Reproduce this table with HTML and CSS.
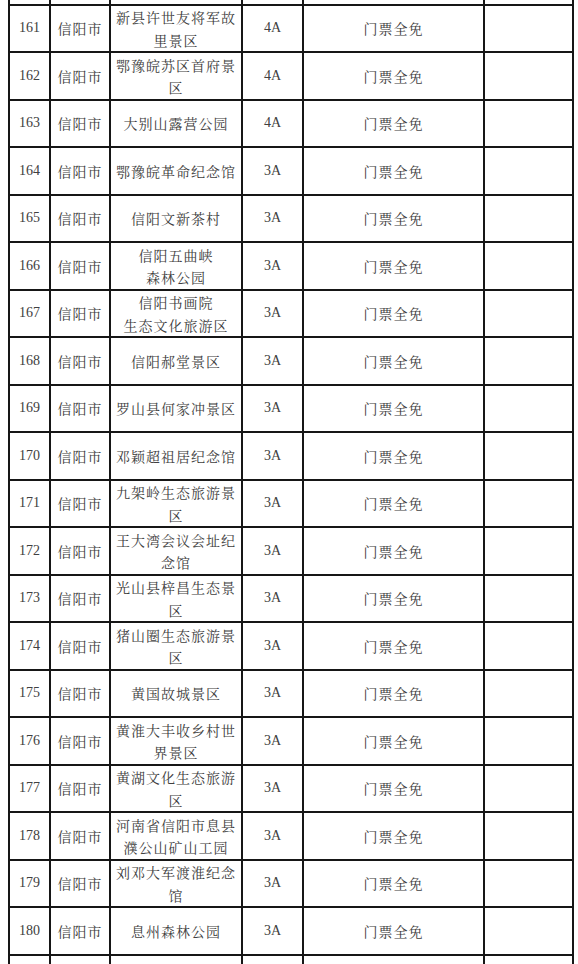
FILE: index.html
```html
<!DOCTYPE html>
<html lang="zh-CN">
<head>
<meta charset="utf-8">
<title>信阳市景区门票</title>
<link rel="stylesheet" href="styles.css">
</head>
<body>
<table class="sheet">
  <colgroup>
    <col class="c-no"><col class="c-city"><col class="c-name"><col class="c-level"><col class="c-policy"><col class="c-note">
  </colgroup>
  <tbody>
    <tr class="cut-top"><td></td><td></td><td></td><td></td><td></td><td></td></tr>
    <tr><td class="no">161</td><td class="city">信阳市</td><td class="name">新县许世友将军故里景区</td><td class="lvl">4A</td><td class="pol">门票全免</td><td></td></tr>
    <tr><td class="no">162</td><td class="city">信阳市</td><td class="name">鄂豫皖苏区首府景区</td><td class="lvl">4A</td><td class="pol">门票全免</td><td></td></tr>
    <tr><td class="no">163</td><td class="city">信阳市</td><td class="name">大别山露营公园</td><td class="lvl">4A</td><td class="pol">门票全免</td><td></td></tr>
    <tr><td class="no">164</td><td class="city">信阳市</td><td class="name">鄂豫皖革命纪念馆</td><td class="lvl">3A</td><td class="pol">门票全免</td><td></td></tr>
    <tr><td class="no">165</td><td class="city">信阳市</td><td class="name">信阳文新茶村</td><td class="lvl">3A</td><td class="pol">门票全免</td><td></td></tr>
    <tr><td class="no">166</td><td class="city">信阳市</td><td class="name">信阳五曲峡<br>森林公园</td><td class="lvl">3A</td><td class="pol">门票全免</td><td></td></tr>
    <tr><td class="no">167</td><td class="city">信阳市</td><td class="name">信阳书画院<br>生态文化旅游区</td><td class="lvl">3A</td><td class="pol">门票全免</td><td></td></tr>
    <tr><td class="no">168</td><td class="city">信阳市</td><td class="name">信阳郝堂景区</td><td class="lvl">3A</td><td class="pol">门票全免</td><td></td></tr>
    <tr><td class="no">169</td><td class="city">信阳市</td><td class="name">罗山县何家冲景区</td><td class="lvl">3A</td><td class="pol">门票全免</td><td></td></tr>
    <tr><td class="no">170</td><td class="city">信阳市</td><td class="name">邓颖超祖居纪念馆</td><td class="lvl">3A</td><td class="pol">门票全免</td><td></td></tr>
    <tr><td class="no">171</td><td class="city">信阳市</td><td class="name">九架岭生态旅游景区</td><td class="lvl">3A</td><td class="pol">门票全免</td><td></td></tr>
    <tr><td class="no">172</td><td class="city">信阳市</td><td class="name">王大湾会议会址纪念馆</td><td class="lvl">3A</td><td class="pol">门票全免</td><td></td></tr>
    <tr><td class="no">173</td><td class="city">信阳市</td><td class="name">光山县梓昌生态景区</td><td class="lvl">3A</td><td class="pol">门票全免</td><td></td></tr>
    <tr><td class="no">174</td><td class="city">信阳市</td><td class="name">猪山圈生态旅游景区</td><td class="lvl">3A</td><td class="pol">门票全免</td><td></td></tr>
    <tr><td class="no">175</td><td class="city">信阳市</td><td class="name">黄国故城景区</td><td class="lvl">3A</td><td class="pol">门票全免</td><td></td></tr>
    <tr><td class="no">176</td><td class="city">信阳市</td><td class="name">黄淮大丰收乡村世界景区</td><td class="lvl">3A</td><td class="pol">门票全免</td><td></td></tr>
    <tr><td class="no">177</td><td class="city">信阳市</td><td class="name">黄湖文化生态旅游区</td><td class="lvl">3A</td><td class="pol">门票全免</td><td></td></tr>
    <tr><td class="no">178</td><td class="city">信阳市</td><td class="name">河南省信阳市息县<br>濮公山矿山工园</td><td class="lvl">3A</td><td class="pol">门票全免</td><td></td></tr>
    <tr><td class="no">179</td><td class="city">信阳市</td><td class="name">刘邓大军渡淮纪念馆</td><td class="lvl">3A</td><td class="pol">门票全免</td><td></td></tr>
    <tr><td class="no">180</td><td class="city">信阳市</td><td class="name">息州森林公园</td><td class="lvl">3A</td><td class="pol">门票全免</td><td></td></tr>
    <tr class="cut-bottom"><td></td><td></td><td></td><td></td><td></td><td></td></tr>
  </tbody>
</table>
</body>
</html>
```
FILE: styles.css
```css
html, body {
  margin: 0;
  padding: 0;
  background: #ffffff;
}
body {
  height: 964px;
  overflow: hidden;
}
.sheet {
  border-collapse: collapse;
  table-layout: fixed;
  width: 564px;
  margin-left: 8px;
  font-family: "Liberation Serif", "Noto Serif CJK SC", "Noto Sans CJK SC", serif;
  color: #404040;
}
.c-no { width: 41px; }
.c-city { width: 60px; }
.c-name { width: 132px; }
.c-level { width: 61px; }
.c-policy { width: 181px; }
.c-note { width: 89px; }
.sheet td {
  border: 2px solid #161616;
  padding: 0;
  height: 45px;
  text-align: center;
  vertical-align: middle;
  font-size: 14px;
  line-height: 22.5px;
}
.sheet tr:nth-child(odd) td {
  height: 46px;
}
.sheet tr.cut-top td {
  height: 4px;
  border-top: none;
}
.sheet tr.cut-bottom td {
  height: 45px;
  border-bottom: none;
}
.sheet .no {
  font-size: 14px;
}
.sheet .city,
.sheet .pol {
  font-family: "Noto Serif CJK SC", "Noto Sans CJK SC", serif;
  font-weight: 400;
  letter-spacing: 1px;
}
.sheet .name {
  font-family: "Noto Serif CJK SC", "Noto Sans CJK SC", serif;
  font-weight: 400;
  letter-spacing: 1px;
  padding: 0 3px;
}
.sheet .lvl {
  font-size: 14px;
}
```
